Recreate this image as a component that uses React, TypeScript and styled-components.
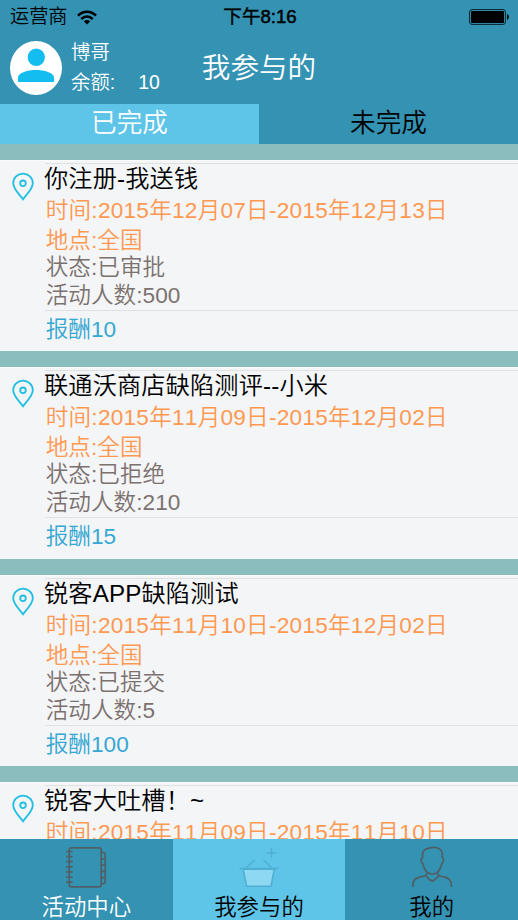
import React from "react";
import styled, { createGlobalStyle } from "styled-components";

interface Activity {
  id: number;
  title: string;
  start: string;
  end: string;
  place: string;
  status: string;
  people: number;
  reward: number;
}

interface ActiveProps {
  $active?: boolean;
}

interface LineProps {
  $height: number;
  $color: string;
  $spacing?: number;
}

const activities: Activity[] = [
  { id: 1, title: "你注册-我送钱", start: "2015年12月07日", end: "2015年12月13日", place: "全国", status: "已审批", people: 500, reward: 10 },
  { id: 2, title: "联通沃商店缺陷测评--小米", start: "2015年11月09日", end: "2015年12月02日", place: "全国", status: "已拒绝", people: 210, reward: 15 },
  { id: 3, title: "锐客APP缺陷测试", start: "2015年11月10日", end: "2015年12月02日", place: "全国", status: "已提交", people: 5, reward: 100 },
  { id: 4, title: "锐客大吐槽！~", start: "2015年11月09日", end: "2015年11月10日", place: "全国", status: "已提交", people: 20, reward: 10 },
];

const GlobalStyle = createGlobalStyle`
  * {
    box-sizing: border-box;
  }

  body {
    margin: 0;
    overflow: hidden;
    font-family: "Liberation Sans", "Noto Sans CJK SC", sans-serif;
    font-weight: 350;
    font-kerning: none;
  }

  svg {
    display: block;
    flex: none;
  }
`;

const Screen = styled.div`
  display: flex;
  flex-direction: column;
  width: 518px;
  height: 920px;
  overflow: hidden;
  background-color: #8bbdbe;
`;

const TopBar = styled.div`
  flex: none;
  background-color: #3492b3;
`;

const StatusBar = styled.div`
  display: grid;
  grid-template-columns: 1fr auto 1fr;
  align-items: center;
  height: 33px;
  padding: 1px 8px 0 10px;
  font-size: 19.2px;
  line-height: 32px;
  color: #000;
`;

const Carrier = styled.div`
  display: flex;
  align-items: center;
  gap: 9px;
`;

const Clock = styled.div`
  font-size: 18.6px;
  -webkit-text-stroke: 0.5px #000;
`;

const Battery = styled.div`
  justify-self: end;
`;

const Header = styled.header`
  display: grid;
  grid-template-columns: 1fr auto 1fr;
  align-items: center;
  height: 71px;
  color: #fff;
`;

const User = styled.div`
  display: flex;
  gap: 9px;
  padding-left: 10px;
`;

const UserInfo = styled.div`
  display: flex;
  flex-direction: column;
  font-size: 19.4px;
  line-height: 30px;
  margin-top: -4px;
`;

const Balance = styled.div`
  display: flex;
  gap: 23px;
`;

const PageTitle = styled.h1`
  margin: 0;
  font-size: 28.6px;
  font-weight: 350;
  line-height: 71px;
`;

const Tabs = styled.div`
  display: flex;
  height: 40px;
`;

const Tab = styled.div<ActiveProps>`
  flex: 1;
  font-size: 25.6px;
  line-height: 38px;
  text-align: center;
  color: ${(props) => (props.$active ? "#fff" : "#000")};
  background-color: ${(props) => (props.$active ? "#5ec4e8" : "transparent")};
`;

const List = styled.main`
  display: flex;
  flex: 1;
  flex-direction: column;
  gap: 16px;
  min-height: 0;
  padding-top: 16px;
  overflow: hidden;
`;

const Card = styled.section`
  display: flex;
  flex: none;
  height: 191.3px;
  background-color: #f3f5f7;
  border-top: 1px solid #fafbfc;
`;

const PinCell = styled.div`
  flex: none;
  width: 45px;
  padding: 11px 0 0 11px;
`;

const CardBody = styled.div`
  flex: 1;
  margin-top: 2px;
  border-top: 1px solid #e0e1e2;
`;

const CardTitle = styled.h2`
  margin: 0 0 0 -1px;
  font-size: 24.2px;
  font-weight: 350;
  line-height: 30px;
  letter-spacing: 0.15px;
  color: #000;
`;

const Line = styled.p<LineProps>`
  margin: 0;
  height: ${(props) => props.$height}px;
  padding-left: 0.7px;
  font-size: 22.6px;
  line-height: ${(props) => props.$height}px;
  letter-spacing: ${(props) => props.$spacing ?? 0.05}px;
  color: ${(props) => props.$color};
  white-space: nowrap;
`;

const Reward = styled(Line)`
  height: 38px;
  border-top: 1px solid #e0e1e2;
`;

const BottomNav = styled.nav`
  display: flex;
  flex: none;
  height: 81px;
  background-color: #3492b3;
`;

const NavItem = styled.div<ActiveProps & { $light?: boolean }>`
  display: flex;
  flex: 1;
  flex-direction: column;
  align-items: center;
  padding-top: 6px;
  font-size: 22.4px;
  line-height: 37px;
  color: ${(props) => (props.$light ? "#fff" : "#000")};
  background-color: ${(props) => (props.$active ? "#5ec4e8" : "transparent")};
`;

const WifiIcon = () => (
  <svg width="20" height="15" viewBox="0 0 20 15" fill="none" stroke="#000" strokeWidth="2.5">
    <path d="M1 5.6C6 .3 14 .3 19 5.6" />
    <path d="M4.3 9C7.6 5.7 12.4 5.7 15.7 9" />
    <path d="M10 14.5 6.9 11.2Q10 8.8 13.1 11.2Z" fill="#000" stroke="none" />
  </svg>
);

const BatteryIcon = () => (
  <svg width="41" height="16" viewBox="0 0 41 16">
    <rect x=".6" y=".6" width="35.8" height="14.8" rx="2.4" fill="none" stroke="#06222c" />
    <rect x="2" y="2" width="33" height="12" rx="1" fill="#000" />
    <path d="M38 5q2 .8 2 3t-2 3z" fill="#000" />
  </svg>
);

const Avatar = () => (
  <svg width="52" height="54" viewBox="0 0 52 54">
    <ellipse cx="26" cy="27" rx="26" ry="27" fill="#fff" />
    <ellipse cx="26.3" cy="16.2" rx="8.6" ry="8.8" fill="#13bdf0" />
    <path d="M8 41V36.5C8 31.5 18 29 26 29S44 31.5 44 36.5V41Z" fill="#13bdf0" />
  </svg>
);

const PinIcon = () => (
  <svg width="24" height="29" viewBox="0 0 24 29" fill="none" stroke="#1fbfe3" strokeWidth="1.8">
    <path d="M12 27.3C9.5 23.5 2.2 17.2 2.2 11.2A9.8 9.6 0 0 1 21.8 11.2C21.8 17.2 14.5 23.5 12 27.3Z" />
    <circle cx="12" cy="11.3" r="2.8" />
  </svg>
);

const rings = [6.5, 11.6, 16.7, 21.8, 26.9, 32, 37.1];

const NotebookIcon = () => (
  <svg width="44" height="44" viewBox="0 0 44 44" fill="none" stroke="#4f6066" strokeWidth="1.7" strokeLinecap="round">
    <rect x="5.2" y="2.8" width="32" height="39" rx="2" />
    {rings.map((y) => (
      <path key={y} d={`M2.8 ${y}H8`} />
    ))}
    <path d="M37.2 7.5H39.5Q41.2 7.5 41.2 9.2V37Q41.2 38.6 39.5 38.6H37.2M37.2 14H41M37.2 20.2H41M37.2 26.4H41M37.2 32.6H41" />
  </svg>
);

const BasketIcon = () => (
  <svg width="44" height="44" viewBox="0 0 44 44" fill="none" stroke="#4fafd2" strokeWidth="1.5">
    <path d="M6.2 24.2H37.3L34 41.2H9.6Z" fill="#8ed8f3" />
    <path d="M2.5 23.5H41.5M9.5 22.5 17.5 15.2M26.5 15.2 34.5 22.5M34.5 3V13M29.5 8H39.5" />
  </svg>
);

const PersonIcon = () => (
  <svg width="44" height="44" viewBox="0 0 44 44" fill="none" stroke="#4f6066" strokeWidth="1.7" strokeLinejoin="round">
    <path d="M12.6 12.5C11.8 6.5 14 4.2 17.5 3.6C22 2 27.5 2 29.8 4.2C33 6 32.4 9.5 32.2 12.5C34.4 13.3 33.8 17.5 31.8 18.5C31 22 29.5 25.5 27.3 27.5Q22.3 30.6 17.3 27.5C15.1 25.5 13.6 22 12.8 18.5C10.8 17.5 10.2 13.3 12.6 12.5Z" />
    <path d="M2.8 42C2.3 34.5 7 32.2 12 31.7C14.5 31.4 16.4 30.6 17.2 28M27.4 28C28.2 30.6 30 31.4 32.5 31.7C37.5 32.2 42 34.5 41.5 42M16.2 31Q18.5 34.4 22.3 36.3Q26 34.4 28.4 31" />
  </svg>
);

const ActivityCard: React.FC<{ item: Activity }> = ({ item }) => (
  <Card>
    <PinCell>
      <PinIcon />
    </PinCell>
    <CardBody>
      <CardTitle>{item.title}</CardTitle>
      <Line $height={34} $color="#ff9850" $spacing={0.25}>时间:{item.start}-{item.end}</Line>
      <Line $height={25} $color="#ff9850">地点:{item.place}</Line>
      <Line $height={29} $color="#7b716e">状态:{item.status}</Line>
      <Line $height={28} $color="#7b716e">活动人数:{item.people}</Line>
      <Reward $height={37} $color="#35a7d3">报酬{item.reward}</Reward>
    </CardBody>
  </Card>
);

export default function App() {
  return (
    <>
      <GlobalStyle />
      <Screen>
        <TopBar>
          <StatusBar>
            <Carrier>
              运营商
              <WifiIcon />
            </Carrier>
            <Clock>下午8:16</Clock>
            <Battery>
              <BatteryIcon />
            </Battery>
          </StatusBar>
          <Header>
            <User>
              <Avatar />
              <UserInfo>
                <div>博哥</div>
                <Balance>
                  <span>余额:</span>
                  <span>10</span>
                </Balance>
              </UserInfo>
            </User>
            <PageTitle>我参与的</PageTitle>
          </Header>
          <Tabs>
            <Tab $active>已完成</Tab>
            <Tab>未完成</Tab>
          </Tabs>
        </TopBar>
        <List>
          {activities.map((item) => (
            <ActivityCard key={item.id} item={item} />
          ))}
        </List>
        <BottomNav>
          <NavItem $light>
            <NotebookIcon />
            活动中心
          </NavItem>
          <NavItem $active>
            <BasketIcon />
            我参与的
          </NavItem>
          <NavItem>
            <PersonIcon />
            我的
          </NavItem>
        </BottomNav>
      </Screen>
    </>
  );
}
